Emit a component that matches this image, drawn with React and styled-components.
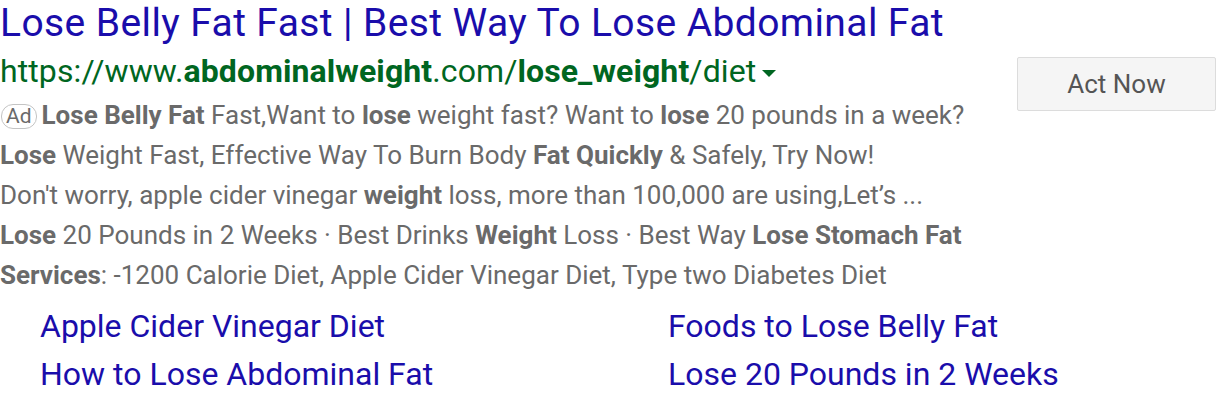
import React from 'react';
import styled, { createGlobalStyle } from 'styled-components';

const GlobalStyle = createGlobalStyle`
  body {
    margin: 0;
    background: #fff;
    font-family: Roboto, 'Liberation Sans', sans-serif;
  }
`;

const AdCard = styled.div`
  width: 1216px;
  height: 402px;
  overflow: hidden;
`;

const Title = styled.a`
  display: block;
  font-size: 39px;
  line-height: 46px;
  letter-spacing: 0.4px;
  color: #1a0dab;
  text-decoration: none;
  white-space: nowrap;
`;

const Body = styled.div`
  display: flex;
  justify-content: space-between;
  align-items: flex-start;
`;

const Main = styled.div`
  display: flex;
  flex-direction: column;
`;

const UrlLine = styled.div`
  margin-top: 3px;
  display: flex;
  align-items: center;
  font-size: 32px;
  line-height: 44px;
  letter-spacing: 0.1px;
  color: #006621;
  white-space: nowrap;

  b {
    font-weight: 700;
  }
`;

const Caret = styled.span`
  margin: 4px 0 0 6px;
  width: 0;
  height: 0;
  border-left: 7px solid transparent;
  border-right: 7px solid transparent;
  border-top: 7px solid #006621;
`;

const Description = styled.div`
  margin-top: 2px;
  font-size: 26px;
  line-height: 40px;
  color: #6a6a6a;
  white-space: nowrap;

  b {
    font-weight: 700;
  }
`;

const Badge = styled.span`
  display: inline-block;
  box-sizing: border-box;
  height: 25px;
  padding: 0 4px;
  margin: 0 5px 0 1px;
  border: 1px solid #c4c4c4;
  border-radius: 12px;
  font-size: 21px;
  line-height: 23px;
  vertical-align: 1px;
  color: #6a6a6a;
`;

const ActButton = styled.button`
  margin-top: 11px;
  width: 199px;
  height: 54px;
  box-sizing: border-box;
  background: #f5f5f5;
  border: 1px solid #dcdcdc;
  border-radius: 2px;
  font-family: Roboto, 'Liberation Sans', sans-serif;
  font-size: 26px;
  color: #555;
  cursor: pointer;
`;

const Sitelinks = styled.div`
  margin-top: 7px;
  padding-left: 40px;
  display: grid;
  grid-template-columns: 628px 1fr;
`;

const Sitelink = styled.a`
  font-size: 32px;
  line-height: 48px;
  color: #1a0dab;
  text-decoration: none;
  white-space: nowrap;
`;

const sitelinks = [
  'Apple Cider Vinegar Diet',
  'Foods to Lose Belly Fat',
  'How to Lose Abdominal Fat',
  'Lose 20 Pounds in 2 Weeks',
];

export default function App() {
  return (
    <AdCard>
      <GlobalStyle />
      <Title href="#">Lose Belly Fat Fast | Best Way To Lose Abdominal Fat</Title>
      <Body>
        <Main>
          <UrlLine>
            <span>
              https://www.<b>abdominalweight</b>.com/<b>lose_weight</b>/diet
            </span>
            <Caret />
          </UrlLine>
          <Description>
            <div>
              <Badge>Ad</Badge>
              <b>Lose Belly Fat</b> Fast,Want to <b>lose</b> weight fast? Want to <b>lose</b> 20 pounds in a week?
            </div>
            <div>
              <b>Lose</b> Weight Fast, Effective Way To Burn Body <b>Fat Quickly</b> &amp; Safely, Try Now!
            </div>
            <div>
              Don't worry, apple cider vinegar <b>weight</b> loss, more than 100,000 are using,Let’s ...
            </div>
            <div>
              <b>Lose</b> 20 Pounds in 2 Weeks · Best Drinks <b>Weight</b> Loss · Best Way <b>Lose Stomach Fat</b>
            </div>
            <div>
              <b>Services</b>: -1200 Calorie Diet, Apple Cider Vinegar Diet, Type two Diabetes Diet
            </div>
          </Description>
        </Main>
        <ActButton>Act Now</ActButton>
      </Body>
      <Sitelinks>
        {sitelinks.map((s) => (
          <Sitelink key={s} href="#">{s}</Sitelink>
        ))}
      </Sitelinks>
    </AdCard>
  );
}
